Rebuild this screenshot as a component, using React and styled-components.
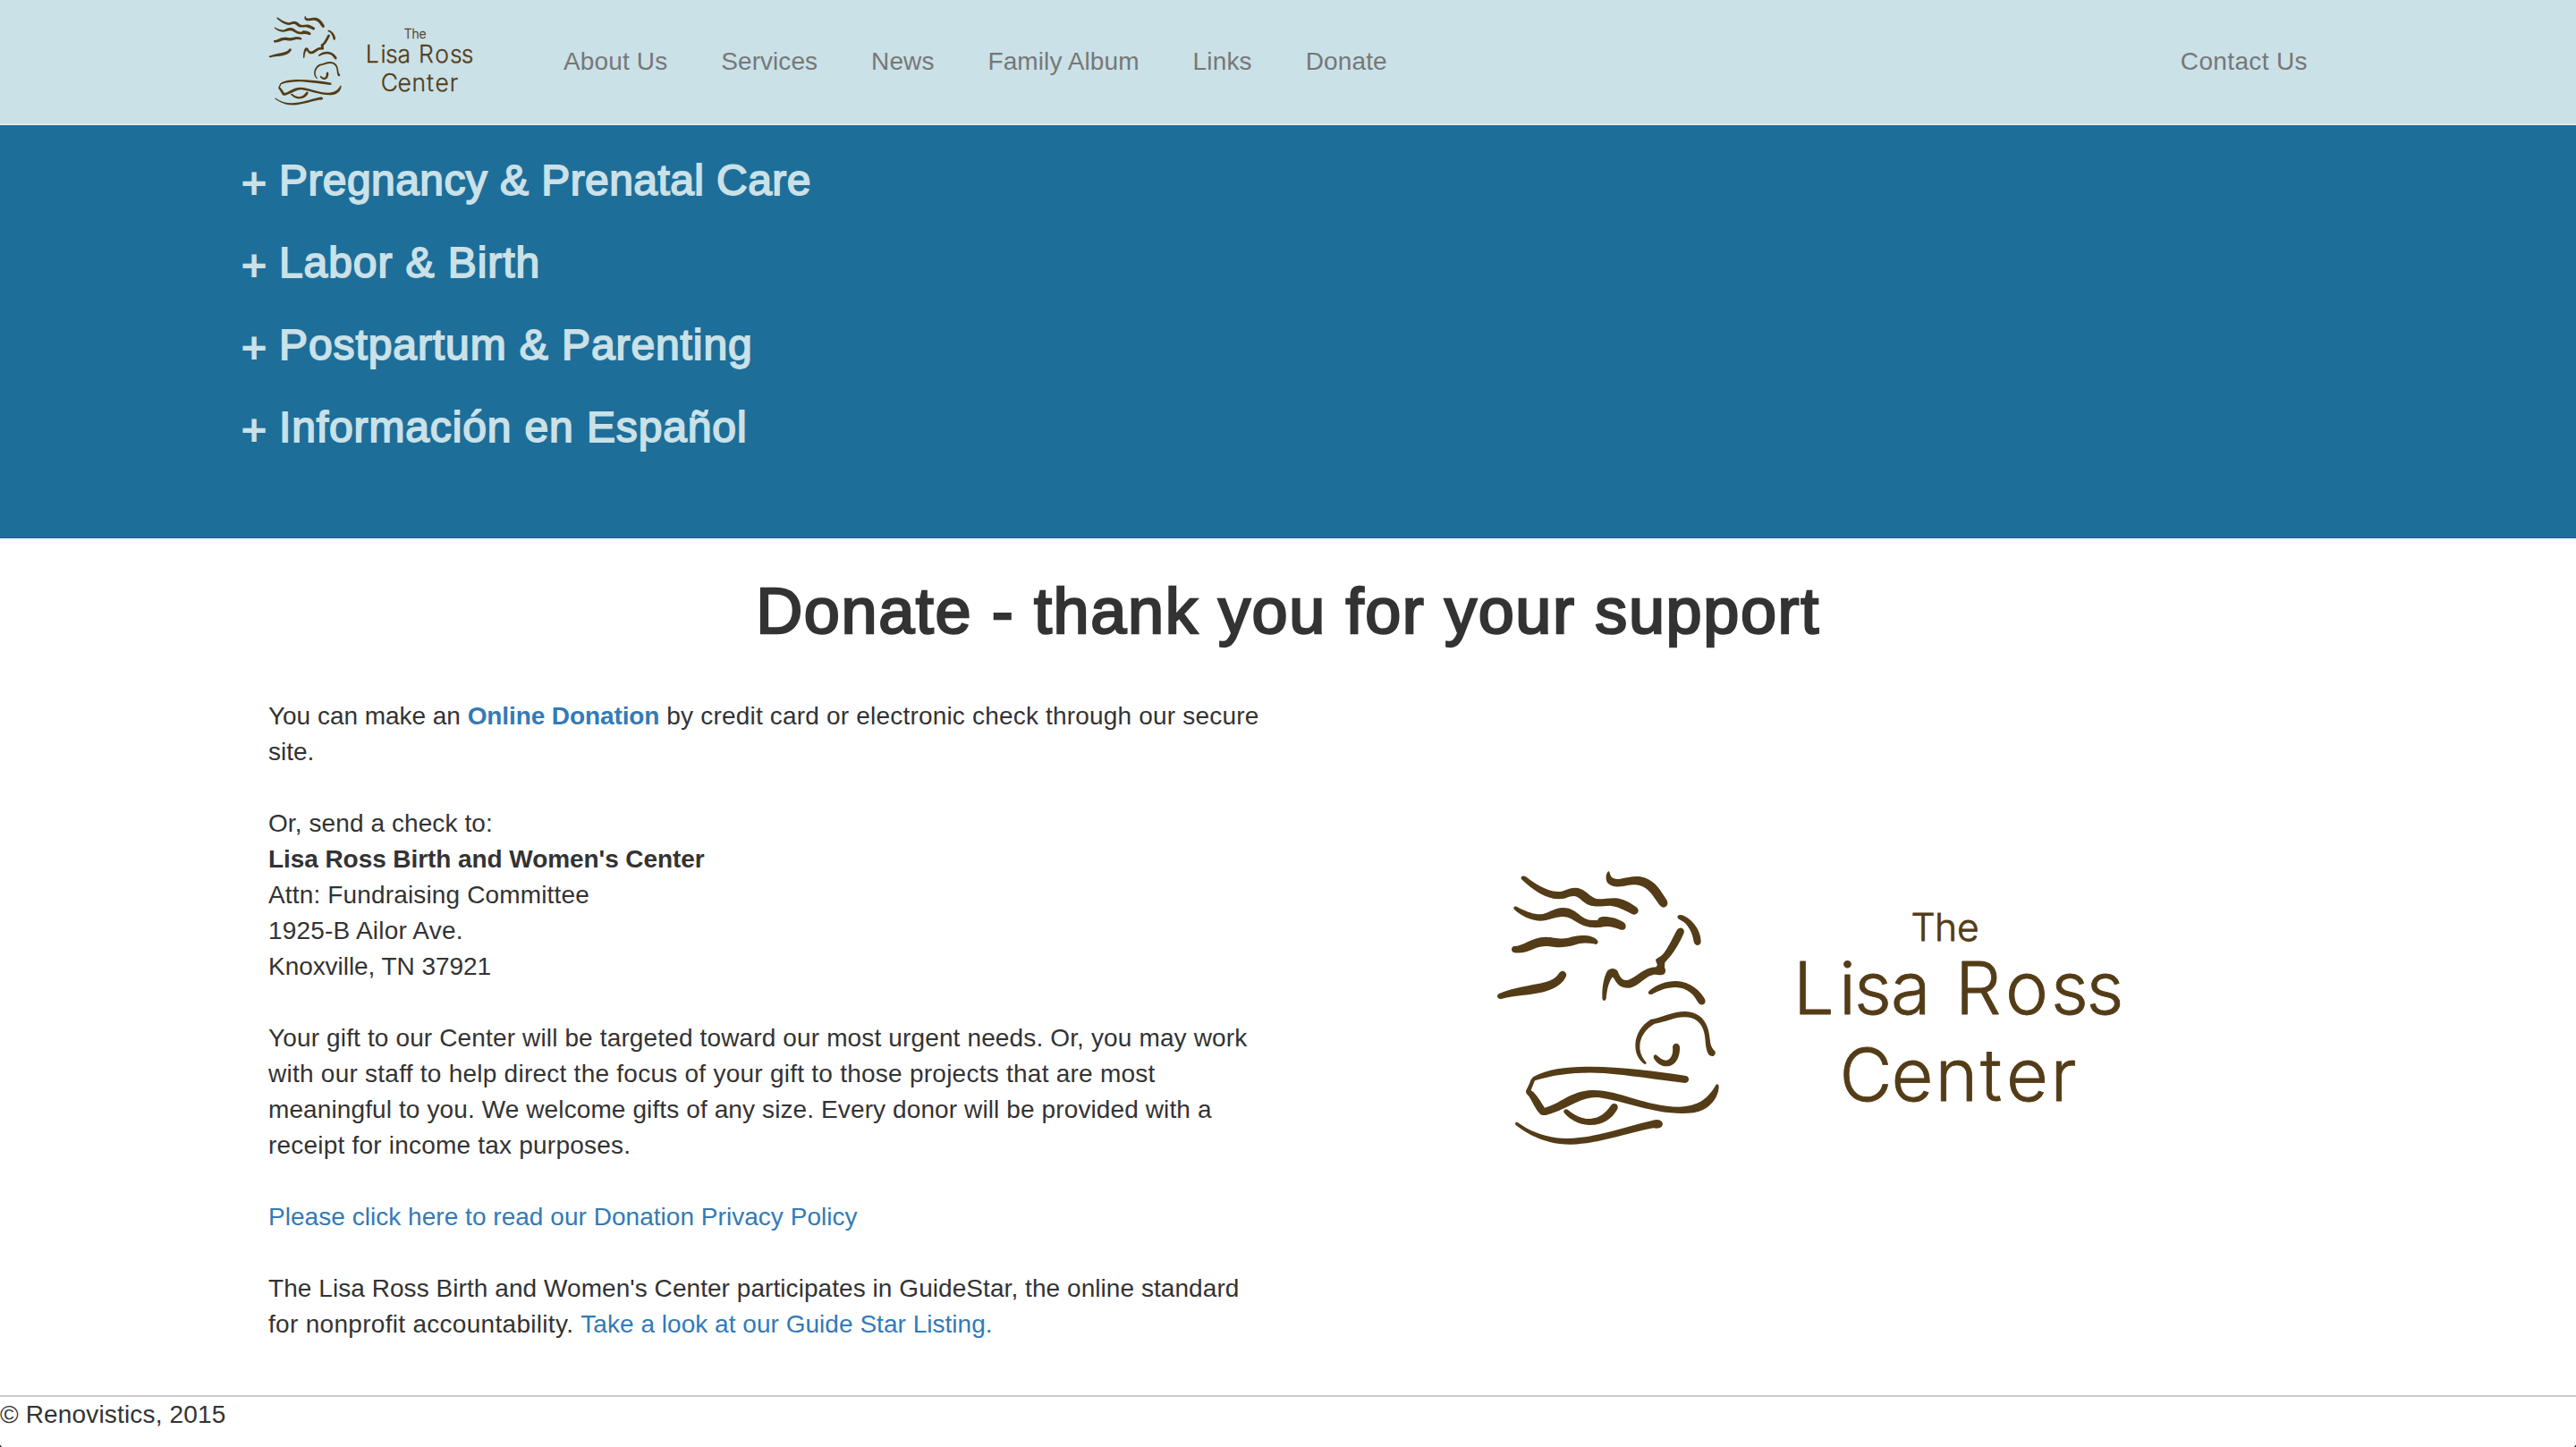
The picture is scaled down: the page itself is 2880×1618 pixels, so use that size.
import React from 'react';
import styled, { createGlobalStyle } from 'styled-components';

const GlobalStyle = createGlobalStyle`
  * { box-sizing: border-box; }
  body {
    margin: 0;
    background: #fff;
    color: #333;
    font-family: "Liberation Sans", Arial, sans-serif;
    font-size: 28px;
    line-height: 40px;
    overflow: hidden;
  }
`;

const Page = styled.div`
  position: relative;
  height: 1618px;
  display: flex;
  flex-direction: column;

  /* rounded window corners */
  &::before,
  &::after {
    content: '';
    position: absolute;
    bottom: 0;
    width: 10px;
    height: 10px;
  }
  &::before {
    left: 0;
    background: radial-gradient(circle at top right, transparent 12px, #444 12.8px);
  }
  &::after {
    right: 0;
    background: radial-gradient(circle at top left, transparent 12px, #444 12.8px);
  }
`;

const Header = styled.header`
  height: 140px;
  background: #cae1e7;
  border-bottom: 2px solid #e7e7e7;
`;

const HeaderInner = styled.div`
  width: 2280px;
  margin: 0 auto;
  height: 138px;
  display: flex;
  align-items: center;
`;

const Brand = styled.a`
  display: block;
  width: 300px;
  padding-bottom: 2px;
`;

const Nav = styled.nav`
  flex: 1;
  display: flex;
  padding-left: 30px;
  gap: 60px;
`;

const NavLink = styled.a`
  color: #777;
  white-space: nowrap;
  letter-spacing: ${(p) => p.$track || 0}px;
  margin-left: ${(p) => (p.$end ? 'auto' : '0')};
`;

const Topics = styled.section`
  height: 462px;
  background: #1e6e9a;
  color: #cae1e7;
  padding: 36px 270px 0;
`;

const Topic = styled.h3`
  display: flex;
  height: 52px;
  margin: 0 0 40px;
  font-size: 48px;
  font-weight: 400;
  line-height: 52px;
  white-space: nowrap;
  letter-spacing: ${(p) => p.$track || 0}px;
  -webkit-text-stroke: 1.8px currentColor;
`;

const Plus = styled.span`
  width: 42px;
  padding-top: 3px;
  letter-spacing: 0;
`;

const Main = styled.main`
  width: 2280px;
  margin: 0 auto;
  height: 958px;
`;

const Title = styled.h1`
  margin: 42px 0 58px;
  font-size: 72px;
  font-weight: 400;
  line-height: 79px;
  text-align: center;
  letter-spacing: 1.63px;
  -webkit-text-stroke: 2.5px currentColor;
`;

const Columns = styled.div`
  display: grid;
  grid-template-columns: 1110px 1110px;
  gap: 60px;
`;

const Paragraph = styled.p`
  margin: 0 0 40px;
`;

const Line = styled.span`
  display: block;
  white-space: nowrap;
  letter-spacing: ${(p) => p.$track || 0}px;
`;

const Run = styled.span`
  letter-spacing: ${(p) => p.$track || 0}px;
`;

const Link = styled.a`
  color: #337ab7;
  letter-spacing: ${(p) => p.$track || 0}px;
`;

const Figure = styled.div`
  padding: 191px 0 0 202px;
`;

const LogoSvg = styled.svg`
  display: block;
  width: ${(p) => p.$width}px;
  height: auto;
  fill: #533c17;
`;

const LogoText = styled.text`
  font-family: Inter, "Open Sans", sans-serif;
  font-weight: 300;
  font-size: ${(p) => p.$size}px;
  stroke: #533c17;
  stroke-width: 0.8px;
  stroke-linejoin: round;
`;

const Footer = styled.footer`
  height: 58px;
  border-top: 2px solid #ccc;
  letter-spacing: 0.16px;
`;

const upperStrokes = [
  'M122 62Q128 55 138 61C165 82 205 110 245 111C270 111 275 99 304 98C340 99 352 134 382 136C405 136 425 130 450 134C475 140 495 152 511 165Q519 176 511 184Q504 191 495 187C470 174 445 160 420 158C395 158 378 165 352 157C328 149 318 126 298 126C280 126 275 135 250 136C205 136 160 105 122 68Z',
  'M97 163Q103 158 112 164C135 175 160 188 188 187C215 184 230 166 262 165C310 165 318 205 360 207C375 207 379 209 380 203Q385 194 400 195C425 195 445 201 468 215Q477 226 470 236Q462 242 453 238C435 230 415 226 400 229C380 233 350 234 325 222C300 210 285 194 258 195C230 197 215 208 185 209C150 207 120 190 98 170Z',
  'M98 294C130 294 155 264 205 263C235 264 250 272 280 266C305 259 320 256 345 259C365 262 375 270 379 276Q382 284 374 288C355 284 335 281 315 286C290 293 265 302 230 296C205 293 190 292 165 303C145 311 125 319 100 316Q89 313 90 303Q91 296 98 294Z',
  'M47 454C85 437 130 430 175 421C210 414 235 408 250 383Q258 374 269 380Q277 388 271 399C255 428 220 443 190 449C145 459 100 459 58 470Q46 473 42 464Q41 457 47 454Z',
  'M415 42Q419 43 420 52C424 66 435 71 455 68C480 65 505 55 535 64C575 77 590 110 611 140Q616 152 609 160Q600 168 590 160C575 145 565 118 540 100C520 86 500 86 475 91C455 96 425 98 411 80C405 70 405 50 415 42Z',
  'M647 193Q651 187 662 190C695 202 725 240 725 278Q724 289 714 291Q704 290 701 279C697 255 690 238 675 220C665 209 655 207 648 201Q645 197 647 193Z',
  'M646 238Q652 231 661 233Q671 238 668 250C655 280 640 305 625 325L604 349L603 366Q609 374 604 385Q600 391 585 391C575 388 565 388 553 394C530 406 508 432 485 434C460 436 445 425 435 405Q429 393 425 402C413 420 409 450 407 470Q405 477 399 477Q393 474 394 462C393 430 400 395 411 377Q418 368 430 369Q443 371 447 380C453 398 462 410 480 408C510 398 535 364 575 364L579 356Q574 347 573 339C580 332 592 328 600 318C620 292 630 265 646 238Z',
  'M551 444C580 420 610 410 645 411C690 414 725 445 739 473Q742 485 732 490Q721 492 715 482C700 455 680 434 640 432C610 432 585 443 561 455Q554 458 549 453Q547 448 551 444Z',
];

const lowerStrokes = [
  'M556 60C600 52 630 32 675 33C740 38 752 90 755 125C757 145 760 155 773 167Q775 178 766 183Q756 184 751 178C738 155 742 130 736 105C728 70 705 52 670 52C635 52 610 68 570 74C540 90 520 120 520 150C520 175 530 190 542 204Q542 210 537 211C515 195 505 175 505 145C506 110 525 80 556 60Z',
  'M630 152Q632 141 642 140Q652 141 654 152C655 180 645 215 610 217C590 217 575 205 566 188Q565 180 571 178C580 178 590 197 607 197C625 195 633 175 630 152Z',
  'M162 253C210 225 270 219 340 218C450 218 570 232 675 249Q685 252 684 262Q683 272 672 273C580 262 480 246 400 240C320 235 240 242 168 265C162 278 158 290 155 298L163 303C180 320 190 340 201 356C250 345 290 297 365 297C450 297 540 352 650 353C715 352 750 325 775 280Q781 273 785 282C786 320 755 365 700 373C580 385 480 335 380 321C320 318 270 365 205 381L194 381Q184 378 178 368C165 350 155 325 145 314Q137 308 138 299C143 290 150 275 155 262Z',
  'M265 366Q268 358 278 362C300 380 325 393 350 393C385 392 405 375 425 346Q433 339 443 345Q449 353 444 362C425 395 395 414 350 414C315 412 285 395 267 374Q264 370 265 366Z',
  'M102 407Q107 402 113 407C160 440 215 458 275 459C370 458 470 420 570 397Q585 393 594 403Q600 412 592 421Q583 427 565 424C480 440 390 475 290 479C210 480 150 450 103 413Z',
];

function Logo({ width }) {
  return (
    <LogoSvg $width={width} viewBox="12 12 710 310" role="img" aria-label="The Lisa Ross Center">
      <g transform="scale(0.33333)">
        {upperStrokes.map((d) => <path key={d} d={d} />)}
        <g transform="translate(0 480)">
          {lowerStrokes.map((d) => <path key={d} d={d} />)}
        </g>
      </g>
      <LogoText $size={42.6} x="476.5 503 528" y="92">The</LogoText>
      <LogoText $size={81} x="345 396 413 454" y="173.8">Lisa</LogoText>
      <LogoText $size={81} x="526 582 633 672.5" y="173.8">Ross</LogoText>
      <LogoText $size={81} x="396.5 454.5 503.5 554 583 632.5" y="270.8">Center</LogoText>
    </LogoSvg>
  );
}

const navItems = [
  ['About Us', 0.14],
  ['Services', 0.05],
  ['News', 0.1],
  ['Family Album', 0.09],
  ['Links', 0.15],
  ['Donate', 0.12],
];

const topics = [
  ['Pregnancy & Prenatal Care', 0.42],
  ['Labor & Birth', 0.92],
  ['Postpartum & Parenting', 0.91],
  ['Información en Español', 0.87],
];

export default function App() {
  return (
    <Page>
      <GlobalStyle />
      <Header>
        <HeaderInner>
          <Brand><Logo width={232} /></Brand>
          <Nav>
            {navItems.map(([label, track]) => (
              <NavLink key={label} $track={track}>{label}</NavLink>
            ))}
            <NavLink $end $track={0.37}>Contact Us</NavLink>
          </Nav>
        </HeaderInner>
      </Header>
      <Topics>
        {topics.map(([label, track]) => (
          <Topic key={label} $track={track}><Plus>+</Plus>{label}</Topic>
        ))}
      </Topics>
      <Main>
        <Title>Donate - thank you for your support</Title>
        <Columns>
          <div>
            <Paragraph>
              <Line>
                <Run $track={-0.03}>You can make an </Run>
                <Link as="b" $track={-0.1}>Online Donation</Link>
                <Run $track={0.19}> by credit card or electronic check through our secure</Run>
              </Line>
              <Line>site.</Line>
            </Paragraph>
            <Paragraph>
              <Line $track={0.09}>Or, send a check to:</Line>
              <Line as="b" $track={-0.07}>Lisa Ross Birth and Women's Center</Line>
              <Line $track={0.15}>Attn: Fundraising Committee</Line>
              <Line $track={0.2}>1925-B Ailor Ave.</Line>
              <Line $track={-0.05}>Knoxville, TN 37921</Line>
            </Paragraph>
            <Paragraph>
              <Line $track={0.14}>Your gift to our Center will be targeted toward our most urgent needs. Or, you may work</Line>
              <Line $track={0.25}>with our staff to help direct the focus of your gift to those projects that are most</Line>
              <Line $track={0.11}>meaningful to you. We welcome gifts of any size. Every donor will be provided with a</Line>
              <Line $track={0.21}>receipt for income tax purposes.</Line>
            </Paragraph>
            <Paragraph>
              <Line><Link $track={0.035}>Please click here to read our Donation Privacy Policy</Link></Line>
            </Paragraph>
            <Paragraph>
              <Line $track={0.06}>The Lisa Ross Birth and Women's Center participates in GuideStar, the online standard</Line>
              <Line $track={0.3}>for nonprofit accountability. <Link $track={0.03}>Take a look at our Guide Star Listing.</Link></Line>
            </Paragraph>
          </div>
          <Figure><Logo width={710} /></Figure>
        </Columns>
      </Main>
      <Footer>© Renovistics, 2015</Footer>
    </Page>
  );
}
